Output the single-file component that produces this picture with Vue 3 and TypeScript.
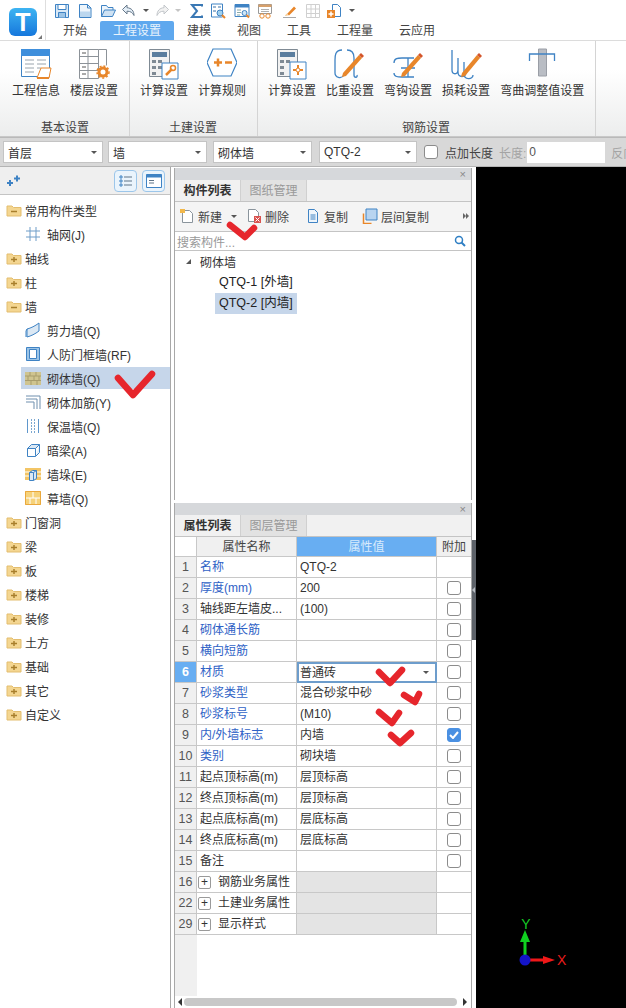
<script setup lang="ts">
interface PropRow {
  no: number
  name: string
  value?: string
  blue?: boolean
  check?: boolean
  checked?: boolean
  group?: boolean
  active?: boolean
}

const B = '#3f83c4'
const O = '#e8862a'
const G = '#7f8a94'

const icons: Record<string, string> = {
  save: `<path d="M1.500 1.500h13v13h-13z" fill="#d9e9f7" stroke="${B}"/><path d="M4 1.500h8v5H4z" fill="#fff" stroke="${B}"/><path d="M4.500 14.500v-5h7v5" fill="#9cc4e6" stroke="${B}"/>`,
  doc: `<path d="M2.500 1.500h8l3.500 3.500v9.500h-11.500z" fill="#eef5fb" stroke="${B}"/><path d="M3 8.500h10v5.500H3z" fill="#bcd7ee"/><path d="M10.500 1.500v3.500h3.500" fill="none" stroke="${B}"/>`,
  open: `<path d="M1.500 13.500v-11h5l1.500 2h5v3" fill="#eef5fb" stroke="${B}"/><path d="M1.500 13.500l3-6.500h11l-3 6.500z" fill="#cfe2f3" stroke="${B}"/>`,
  undo: `<path d="M6 2L1.500 6.500 6 11V8.200c3.500 0 5.500 1.300 7 4.300 0-4.500-2.500-7.500-7-7.800z" fill="#e4eef7" stroke="#66788a"/>`,
  redo: `<path d="M10 2l4.500 4.500L10 11V8.200c-3.500 0-5.500 1.300-7 4.300 0-4.500 2.500-7.500 7-7.800z" fill="#f2f2f2" stroke="#c2c6ca"/>`,
  sigma: `<path d="M13 3.500V2H3l5 6-5 6h10v-1.500" fill="none" stroke="#3a78b4" stroke-width="2"/>`,
  q1: `<path d="M1.500 1h11v13h-11z" fill="#fff" stroke="${B}"/><path d="M3 3h3v2H3zM3 7h3v2H3zM8 3h3v2H8z" fill="#9bb7d2"/><circle cx="10" cy="10" r="3" fill="#9fd0ee" stroke="${B}"/><path d="M12 12l3 3" stroke="${O}" stroke-width="2"/>`,
  q2: `<path d="M1 1.500h14v12H1z" fill="#fff" stroke="${B}"/><path d="M1 1.500h14v3H1z" fill="${B}"/><path d="M3 7h4M3 9.500h4M3 12h3" stroke="#8aa"/><circle cx="10.500" cy="10" r="2.500" fill="#cfe6f6" stroke="${B}"/><path d="M12.500 12l2.500 2.500" stroke="${O}" stroke-width="2"/>`,
  q3: `<path d="M1.500 1.500h13v9h-13z" fill="#fff" stroke="#9a9a9a"/><path d="M1.500 1.500h13v2.500h-13z" fill="#d7a06b"/><path d="M4 6.500h8M4 8.500h8" stroke="#b0b0b0"/><circle cx="5" cy="13" r="2.200" fill="none" stroke="${O}"/><circle cx="11" cy="13" r="2.200" fill="none" stroke="${O}"/>`,
  q4: `<path d="M6 11L13 3.500l2 2L8 12.500z" fill="${O}"/><path d="M2 14.500h13" stroke="#a9a9a9"/><path d="M4 13c.5-1.500 1-2 2-2.500l1.500 1.500c-1 .8-2 1-3.500 1z" fill="#f6cf9b"/>`,
  q5: `<path d="M1.500 1.500h13v13h-13zM6 1.500v13M10.500 1.500v13M1.500 6h13M1.500 10.500h13" fill="none" stroke="#d0d0d0"/>`,
  q6: `<path d="M6.500 1.500h5l3 3v9h-8z" fill="#fff" stroke="${B}"/><path d="M1 7h8v8H1z" fill="${O}"/><path d="M5 8.500v5M2.500 11h5" stroke="#fff" stroke-width="1.500"/>`
}

const quick = [
  { i: 'save', w: 23 }, { i: 'doc', w: 23 }, { i: 'open', w: 23 }, { i: 'undo', w: 18 }, { d: 1, w: 16 },
  { i: 'redo', w: 16 }, { d: 2, w: 17 }, { i: 'sigma', w: 20 }, { i: 'q1', w: 23 }, { i: 'q2', w: 24 },
  { i: 'q3', w: 23 }, { i: 'q4', w: 25 }, { i: 'q5', w: 23 }, { i: 'q6', w: 19 }, { d: 1, w: 17 }
]

const tabs = ['开始', '工程设置', '建模', '视图', '工具', '工程量', '云应用']

const big: Record<string, string> = {
  info: `<path d="M1.500 3.500h28v25h-28z" fill="#fff" stroke="${B}"/><path d="M1 1h29v7H1z" fill="#3f8fdc"/><path d="M5 12h9M5 16h9M5 20h9M5 24h9M17 12h9M17 16h9M17 20h4" stroke="#9aa4ad"/><path d="M21 20h10l-2 10H17z" fill="#fff" stroke="${O}"/><path d="M17 30h12" stroke="${O}" stroke-width="2"/>`,
  floor: `<path d="M1.500 1.500h19v29h-19zM10 1.500v29M1.500 8.500h19M1.500 15.500h19M1.500 22.500h19M20.500 1.500h8v16" fill="#fff" stroke="#8c9298"/><path d="M4 5h4M4 19h4M4 26h4" stroke="#555"/><circle cx="25" cy="24" r="4" fill="#fff" stroke="${O}" stroke-width="3"/><circle cx="25" cy="24" r="6" fill="none" stroke="${O}" stroke-width="1.500" stroke-dasharray="2 2"/>`,
  calc: `<path d="M1.500 1.500h20v27h-20z" fill="#f2f2f2" stroke="${G}"/><path d="M4 4h15v5H4z" fill="#5a7d9e"/><path d="M4 12h4v3H4zM10 12h4v3h-4zM4 18h4v3H4zM4 24h4v3H4zM10 18h4v3h-4z" fill="${G}"/><path d="M14 15h16v16H14z" fill="#fff" stroke="${B}"/><path d="M18 27l6-6" stroke="${O}" stroke-width="2.500"/><circle cx="25" cy="20" r="2.500" fill="none" stroke="${O}" stroke-width="1.500"/>`,
  rule: `<path d="M6 1h18l6 13.500-6 13.500H6L0 14.500z" fill="#fff" stroke="${B}" stroke-width="1.200"/><path d="M7 14.500h8M11 10.500v8" stroke="${O}" stroke-width="2.500"/><path d="M18 14.500h7" stroke="${O}" stroke-width="2.500"/>`,
  calc2: `<path d="M1.500 1.500h20v27h-20z" fill="#f2f2f2" stroke="${G}"/><path d="M4 4h15v5H4z" fill="#5a7d9e"/><path d="M4 12h4v3H4zM10 12h4v3h-4zM4 18h4v3H4zM4 24h4v3H4z" fill="${G}"/><path d="M14 14h16v17H14z" fill="#fff" stroke="${B}"/><path d="M22 17v10M17 22h10" stroke="${O}" stroke-width="2"/><circle cx="22" cy="22" r="2" fill="#fff" stroke="${O}"/>`,
  weight: `<path d="M8 2C1 2 1 8 1 12v13c0 4 6 7 9 2" fill="none" stroke="${B}" stroke-width="1.300"/><path d="M13 2c6 0 7 4 7 8v17c0 3 4 3 3 0" fill="none" stroke="${B}" stroke-width="1.300"/><path d="M9 25L25 7l3 3L12 28l-4 1z" fill="${O}"/><path d="M25 7l2-2 3 3-2 2z" fill="#d4552a"/>`,
  hook: `<path d="M2 15c0-5 4-5 8-5h12M2 25c0 4 4 4 8 4h12M16 10v19M9 20h14" fill="none" stroke="${B}" stroke-width="1.300"/><path d="M10 25L26 7l3 3L13 28l-4 1z" fill="${O}"/><path d="M26 7l2-2 3 3-2 2z" fill="#d4552a"/>`,
  loss: `<path d="M2 2v20c0 5 6 5 6 0V10c0 4 0 12 0 14 0 6 8 6 8 0" fill="none" stroke="${B}" stroke-width="1.300"/><path d="M14 14v12c0 6 9 6 9 1" fill="none" stroke="${B}" stroke-width="1.300"/><path d="M12 25L27 7l3 3-15 18-4 1z" fill="${O}"/><path d="M27 7l2-2 3 3-2 2z" fill="#d4552a"/>`,
  bend: `<path d="M10.500 1h8v27h-8z" fill="#b9bdc4" stroke="#9a9ea6"/><path d="M1.500 13V6h25v7" fill="none" stroke="${B}" stroke-width="1.300"/>`
}

const groups = [
  { title: '基本设置', first: true, items: [{ i: 'info', t: '工程信息', w: 32 }, { i: 'floor', t: '楼层设置', w: 32 }] },
  { title: '土建设置', items: [{ i: 'calc', t: '计算设置', w: 32 }, { i: 'rule', t: '计算规则', w: 30 }] },
  {
    title: '钢筋设置',
    items: [
      { i: 'calc2', t: '计算设置', w: 32 }, { i: 'weight', t: '比重设置', w: 32 }, { i: 'hook', t: '弯钩设置', w: 32 },
      { i: 'loss', t: '损耗设置', w: 32 }, { i: 'bend', t: '弯曲调整值设置', w: 28 }
    ]
  }
]

const selects = [
  { t: '首层', w: 100, m: 5 }, { t: '墙', w: 99, m: 6 }, { t: '砌体墙', w: 99, m: 7 }, { t: 'QTQ-2', w: 98, m: 7 }
]

const tree: Record<string, string> = {
  grid: `<path d="M1 5h14M1 11h14M5 1v14M11 1v14" fill="none" stroke="#6f9dc8" stroke-width="1"/>`,
  shear: `<path d="M2 7c4-1 8-3 12-6v8c-4 3-8 5-12 6z" fill="#dbe8f4" stroke="${B}"/><path d="M2 7l-1 2v6" fill="none" stroke="${B}"/>`,
  defense: `<path d="M1.500 1.500h13v13h-13z" fill="#9cc4e6" stroke="${B}"/><path d="M4.500 3.500h7v9h-7z" fill="#fff" stroke="${B}"/>`,
  brick: `<path d="M0 2h16v13H0z" fill="#cfc48f"/><path d="M0 6h16M0 10.500h16M5 2v4M11 2v4M3 6v4.500M9 6v4.500M14 6v4.500M6 10.500V15M12 10.500V15" stroke="#a89d6c"/>`,
  rebar: `<path d="M1 2h14v13M1 5h11v10M1 8h8v7" fill="none" stroke="#6f8fae"/>`,
  insul: `<path d="M2.500 1v14M13.500 1v14" fill="none" stroke="#5f97cc"/><path d="M6.500 1v14M9.500 1v14" fill="none" stroke="#7ba7d0" stroke-dasharray="2 1"/>`,
  beam: `<path d="M2.500 6.500l4-4h8l-4 4z" fill="#dbe8f4" stroke="${B}"/><path d="M2.500 6.500h8v8h-8z" fill="#fff" stroke="${B}"/><path d="M10.500 14.500l4-4v-8" fill="#e8f1f9" stroke="${B}"/>`,
  pier: `<path d="M0 2h16v12H0z" fill="#f3c565"/><path d="M0 6h16M0 10h16" stroke="#fff"/><path d="M4.500 6.500l3-2h4v8l-3 2h-4z" fill="#dbe8f4" stroke="${B}"/><path d="M8.500 6.500v8M4.500 6.500h4l3-2" fill="none" stroke="${B}"/>`,
  curtain: `<path d="M0 1h16v14H0z" fill="#f6d27a"/><path d="M8 1v7M0 8h16M5 8v7M11 8v7" stroke="#fff" stroke-width="1"/><path d="M.5 1.500h15v13H.5z" fill="none" stroke="#eaa83c"/>`
}

const treeRows = [
  { t: '常用构件类型', open: true }, { t: '轴网(J)', i: 'grid' }, { t: '轴线' }, { t: '柱' }, { t: '墙', open: true },
  { t: '剪力墙(Q)', i: 'shear' }, { t: '人防门框墙(RF)', i: 'defense' }, { t: '砌体墙(Q)', i: 'brick', sel: true },
  { t: '砌体加筋(Y)', i: 'rebar' }, { t: '保温墙(Q)', i: 'insul' }, { t: '暗梁(A)', i: 'beam' }, { t: '墙垛(E)', i: 'pier' },
  { t: '幕墙(Q)', i: 'curtain' }, { t: '门窗洞' }, { t: '梁' }, { t: '板' }, { t: '楼梯' }, { t: '装修' }, { t: '土方' },
  { t: '基础' }, { t: '其它' }, { t: '自定义' }
]

const tools = [
  { t: '新建', p: `<path d="M3.500 2.500h7l3 3v9h-10z" fill="#fff" stroke="#8a949c"/><path d="M1 1h5v4H1z" fill="#f2b84b"/>` },
  { t: '删除', p: `<path d="M2.500 1.500h7l3 3v9h-10z" fill="#fff" stroke="#8a949c"/><path d="M8 8h7v7H8z" fill="#d9534f"/><path d="M9.500 9.500l4 4M13.500 9.500l-4 4" stroke="#fff"/>` },
  { t: '复制', p: `<path d="M3.500 1.500h6l3 3v10h-9z" fill="#eef5fb" stroke="${B}"/><path d="M5.500 7h5M5.500 9h5M5.500 11h5" stroke="${B}"/>` },
  { t: '层间复制', p: `<path d="M1.500 5.500v10h8" fill="none" stroke="${O}" stroke-width="1.500"/><path d="M4 1h11v11H4z" fill="#b8d4f0" stroke="${B}"/>` }
]

const rows: PropRow[] = [
  { no: 1, name: '名称', value: 'QTQ-2', blue: true },
  { no: 2, name: '厚度(mm)', value: '200', blue: true, check: true },
  { no: 3, name: '轴线距左墙皮...', value: '(100)', check: true },
  { no: 4, name: '砌体通长筋', blue: true, check: true },
  { no: 5, name: '横向短筋', blue: true, check: true },
  { no: 6, name: '材质', value: '普通砖', blue: true, check: true, active: true },
  { no: 7, name: '砂浆类型', value: '混合砂浆中砂', blue: true, check: true },
  { no: 8, name: '砂浆标号', value: '(M10)', blue: true, check: true },
  { no: 9, name: '内/外墙标志', value: '内墙', blue: true, check: true, checked: true },
  { no: 10, name: '类别', value: '砌块墙', blue: true, check: true },
  { no: 11, name: '起点顶标高(m)', value: '层顶标高', check: true },
  { no: 12, name: '终点顶标高(m)', value: '层顶标高', check: true },
  { no: 13, name: '起点底标高(m)', value: '层底标高', check: true },
  { no: 14, name: '终点底标高(m)', value: '层底标高', check: true },
  { no: 15, name: '备注', check: true },
  { no: 16, name: '钢筋业务属性', group: true },
  { no: 22, name: '土建业务属性', group: true },
  { no: 29, name: '显示样式', group: true }
]

const marks = [
  '118,378 133,395 152,374',
  '230,225 245,237 254,228',
  '379,672 390,683 402,670',
  '404,695 415,702 419,694',
  '379,712 392,723 399,713',
  '391,735 400,743 411,733'
]
</script>

<template>
  <div class="app">
    <header class="top">
      <div class="logo-cell">
        <div class="logo">T</div>
        <i class="logo-corner"></i>
      </div>
      <div class="top-right">
        <div class="quick">
          <span v-for="(q, n) in quick" :key="n" class="quick-item" :style="{ width: q.w + 'px' }">
            <svg v-if="q.i" width="16" height="16" viewBox="0 0 16 16" v-html="icons[q.i]"></svg>
            <i v-else :class="['mini-caret', q.d === 2 && 'pale']"></i>
          </span>
        </div>
        <nav class="tabs">
          <span v-for="t in tabs" :key="t" :class="['tab', t === '工程设置' && 'on']">{{ t }}</span>
        </nav>
      </div>
    </header>

    <section class="ribbon">
      <div v-for="g in groups" :key="g.title" :class="['group', g.first && 'first']">
        <div class="group-items">
          <div v-for="b in g.items" :key="b.t" class="big-btn">
            <svg class="big-icon" :width="b.w" height="32" :viewBox="`0 0 ${b.w} 32`" v-html="big[b.i]"></svg>
            <span>{{ b.t }}</span>
          </div>
        </div>
        <div class="group-title">{{ g.title }}</div>
      </div>
    </section>

    <section class="bar">
      <div v-for="s in selects" :key="s.t" class="select" :style="{ width: s.w + 'px', marginRight: s.m + 'px' }">
        <span>{{ s.t }}</span><i class="mini-caret"></i>
      </div>
      <i class="box bar-box"></i>
      <span class="bar-label">点加长度</span>
      <span class="bar-muted">长度:</span>
      <div class="bar-input">0</div>
      <span class="bar-muted last">反向</span>
    </section>

    <main class="body">
      <aside class="nav">
        <div class="nav-head">
          <svg width="14" height="12" viewBox="0 0 14 12" class="nav-pin">
            <path d="M0 8h6M3 5v6M7 3.500h6M10 .5v6" stroke="#3f83c4" stroke-width="2" />
          </svg>
          <span class="nav-spacer"></span>
          <span class="nav-btn">
            <svg width="14" height="14" viewBox="0 0 14 14"><path d="M1 2h2v2H1zM1 6h2v2H1zM1 10h2v2H1z" fill="none" stroke="#3f83c4" /><path d="M5 3h8M5 7h8M5 11h8" stroke="#5f7488" /></svg>
          </span>
          <span class="nav-btn">
            <svg width="16" height="14" viewBox="0 0 16 14"><path d="M.5.5h15v13H.5z" fill="#fff" stroke="#3f83c4" /><path d="M.5.5h15v3H.5z" fill="#3f83c4" /><path d="M3 6.500h5M3 9h5" stroke="#5f7488" /></svg>
          </span>
        </div>
        <ul class="tree">
          <li v-for="r in treeRows" :key="r.t" :class="['tree-row', r.i && 'leaf', r.sel && 'sel']">
            <svg v-if="r.i" width="16" height="16" viewBox="0 0 16 16" v-html="tree[r.i]"></svg>
            <svg v-else width="16" height="14" viewBox="0 0 16 14">
              <path d="M1 3h5l1.500 1.500H15V13H1z" fill="#f4d691" stroke="#e3bd6e" />
              <path d="M5 8.500h6" stroke="#a87f2c" stroke-width="1.500" />
              <path v-if="!r.open" d="M8 6v5" stroke="#a87f2c" stroke-width="1.500" />
            </svg>
            <span>{{ r.t }}</span>
          </li>
        </ul>
      </aside>

      <div class="middle">
        <section class="panel list-panel">
          <div class="panel-grip">×</div>
          <div class="panel-tabs"><span class="ptab on">构件列表</span><span class="ptab">图纸管理</span></div>
          <div class="tools">
            <span v-for="(t, n) in tools" :key="t.t" class="tool">
              <svg width="16" height="16" viewBox="0 0 16 16" v-html="t.p"></svg>{{ t.t }}
              <i v-if="n === 0" class="mini-caret tool-caret"></i>
            </span>
            <span class="tool-more"><i></i><i></i></span>
          </div>
          <div class="search">
            <span>搜索构件...</span>
            <svg width="12" height="12" viewBox="0 0 12 12"><circle cx="5" cy="5" r="3.500" fill="none" stroke="#2f7fc4" stroke-width="1.500" /><path d="M7.500 7.500l3.500 3.500" stroke="#2f7fc4" stroke-width="2" /></svg>
          </div>
          <div class="parts">
            <div class="part-root"><i class="arrow"></i>砌体墙</div>
            <div class="part">QTQ-1 [外墙]</div>
            <div class="part sel">QTQ-2 [内墙]</div>
          </div>
        </section>

        <section class="panel prop-panel">
          <div class="panel-grip">×</div>
          <div class="panel-tabs"><span class="ptab on">属性列表</span><span class="ptab">图层管理</span></div>
          <div class="row head">
            <span class="no"></span>
            <span class="name-h">属性名称</span>
            <span class="val-h">属性值</span>
            <span class="ext-h">附加</span>
          </div>
          <div v-for="r in rows" :key="r.no" :class="['row', r.active && 'active', r.group && 'group-row']">
            <span class="no">{{ r.no }}</span>
            <span :class="['name', r.blue && 'blue']">
              <i v-if="r.group" class="plus">+</i>{{ r.name }}
            </span>
            <span class="val">
              {{ r.value }}
              <i v-if="r.active" class="mini-caret val-caret"></i>
            </span>
            <span class="ext">
              <i v-if="r.check" :class="['box', r.checked && 'checked']">
                <svg v-if="r.checked" width="10" height="8" viewBox="0 0 10 8"><path d="M1 4l3 3 5-6" fill="none" stroke="#fff" stroke-width="2" /></svg>
              </i>
            </span>
          </div>
          <div class="filler"><span class="filler-no"></span></div>
          <div class="hscroll">
            <i class="arr left"></i>
            <span class="thumb"></span>
            <i class="arr right"></i>
          </div>
        </section>
      </div>

      <div class="strip"><span class="strip-handle"></span></div>

      <div class="canvas">
        <div class="axes">
          <svg width="70" height="70" viewBox="0 0 70 70">
            <path d="M19 50V30" stroke="#10d020" stroke-width="3" />
            <path d="M19 20l-5 12h10z" fill="#10d020" />
            <path d="M19 50h20" stroke="#f01818" stroke-width="3" />
            <path d="M49 50l-12-4v8z" fill="#f01818" />
            <circle cx="19" cy="50" r="5.500" fill="#1414c8" />
            <text x="20" y="19" class="axis-y">Y</text>
            <text x="51" y="55" class="axis-x">X</text>
          </svg>
        </div>
      </div>
    </main>

    <svg class="marks" width="626" height="1008" viewBox="0 0 626 1008">
      <polyline v-for="m in marks" :key="m" :points="m" fill="none" stroke="#e6262c" stroke-width="6.500" stroke-linecap="round" stroke-linejoin="round" />
    </svg>
  </div>
</template>

<style>
html, body { margin: 0; padding: 0; overflow: hidden; background: #fff; }
</style>

<style scoped>
.app {
  position: relative;
  width: 626px;
  height: 1008px;
  overflow: hidden;
  display: flex;
  flex-direction: column;
  font-family: "Liberation Sans", "Noto Sans CJK SC", sans-serif;
  font-size: 12px;
  color: #222;
  background: #fff;
}
i { display: block; font-style: normal; }
ul { margin: 0; padding: 0; list-style: none; }

.top { display: flex; height: 41px; flex: none; background: #fff; border-bottom: 1px solid #dcdcdc; box-sizing: border-box; }
.logo-cell { position: relative; width: 46px; border-right: 1px solid #dedede; padding: 8px 0 0 9px; box-sizing: border-box; }
.logo {
  width: 28px;
  height: 28px;
  border-radius: 6px;
  background: linear-gradient(#3db4f2, #1677dc);
  color: #fff;
  font: bold 25px/28px "Liberation Sans", sans-serif;
  text-align: center;
}
.logo-corner { position: absolute; right: 3px; bottom: 1px; width: 0; height: 0; border-left: 4px solid transparent; border-bottom: 4px solid #777; }
.top-right { flex: 1; display: flex; flex-direction: column; }
.quick { display: flex; height: 21px; align-items: center; padding-left: 4.5px; flex: none; }
.quick-item { display: flex; justify-content: center; align-items: center; flex: none; }
.mini-caret { width: 0; height: 0; border-left: 3px solid transparent; border-right: 3px solid transparent; border-top: 3px solid #555; }
.mini-caret.pale { border-top-color: #c4c4c4; }
.tabs { display: flex; height: 19px; padding-left: 4px; }
.tab { padding: 0 13px; line-height: 20px; color: #444; }
.tab.on { background: #5fa8ee; color: #e8f3fd; border-radius: 2px 2px 0 0; }

.ribbon { display: flex; height: 96px; flex: none; background: linear-gradient(#fff 30%, #eceded); border-bottom: 1px solid #c8c8c8; box-sizing: border-box; }
.group { display: flex; flex-direction: column; padding: 0 11px 0 10px; border-right: 1px solid #d4d4d4; }
.group.first { padding-left: 12px; padding-right: 11px; }
.group-items { display: flex; gap: 10px; flex: 1; padding-top: 7px; }
.big-btn { display: flex; flex-direction: column; align-items: center; color: #333; white-space: nowrap; }
.big-icon { display: block; height: 32px; margin-bottom: 2px; }
.big-btn span { line-height: 18px; }
.group-title { text-align: center; line-height: 18px; margin-bottom: -1px; color: #444; }

.bar { display: flex; align-items: center; height: 30px; flex: none; padding-left: 3px; background: #d8d8d8; border-top: 1px solid #b9b9b9; border-bottom: 1px solid #b4b4b4; box-sizing: border-box; white-space: nowrap; }
.select { display: flex; align-items: center; justify-content: space-between; height: 22px; background: #fff; border: 1px solid #c4c4c4; box-sizing: border-box; padding: 0 5px 0 4px; flex: none; color: #333; }
.box { width: 14px; height: 14px; border: 1px solid #8c8c8c; border-radius: 3px; background: #fff; box-sizing: border-box; flex: none; }
.bar-label { margin-left: 7px; color: #444; }
.bar-muted { margin-left: 6px; color: #a4a4a4; }
.bar-input { width: 78px; height: 21px; line-height: 21px; background: #fff; margin-left: 1px; padding-left: 2px; box-sizing: border-box; color: #555; flex: none; }
.bar-muted.last { margin-left: 6px; }

.body { flex: 1; display: flex; min-height: 0; }
.nav { width: 171px; flex: none; border-right: 1px solid #a8a8a8; box-sizing: border-box; background: #fff; }
.nav-head { display: flex; align-items: center; height: 28px; background: #efefef; border-bottom: 1px solid #c4c4c4; padding: 0 5px 0 7px; box-sizing: border-box; gap: 5px; }
.nav-spacer { flex: 1; }
.nav-btn { width: 23px; height: 22px; border: 1px solid #9cc6ea; border-radius: 4px; background: #eaf4fc; display: flex; align-items: center; justify-content: center; box-sizing: border-box; }
.tree { padding-top: 3px; }
.tree-row { display: flex; align-items: center; gap: 3px; height: 24px; padding-left: 6px; color: #333; }
.tree-row.leaf { padding-left: 25px; gap: 6px; }
.tree-row.sel { background: #c6d6ea; margin-left: 21px; padding-left: 4px; height: 22px; margin-top: 1px; margin-bottom: 1px; }

.middle { width: 298px; flex: none; display: flex; flex-direction: column; margin-left: 3px; gap: 3px; padding-top: 1px; }
.panel { display: flex; flex-direction: column; border: solid #a8a8a8; border-width: 0 1px; background: #fff; box-sizing: border-box; }
.list-panel { height: 332px; flex: none; }
.prop-panel { flex: 1; min-height: 0; }
.panel-grip { height: 12px; background: #d6d8db; text-align: right; padding-right: 5px; line-height: 12px; color: #888; font-size: 11px; flex: none; }
.panel-tabs { display: flex; height: 22px; background: #f1f1f1; border-bottom: 1px solid #c4c4c4; box-sizing: border-box; flex: none; }
.ptab { width: 66px; text-align: center; line-height: 22px; color: #999; background: #e2e2e2; border-right: 1px solid #d0d0d0; box-sizing: border-box; }
.ptab.on { background: #f1f1f1; color: #333; font-weight: bold; }
.tools { display: flex; align-items: center; height: 30px; flex: none; padding: 0 0 1px 4px; background: #f4f4f4; border-bottom: 1px solid #c4c4c4; box-sizing: border-box; color: #444; }
.tool { display: flex; align-items: center; gap: 3px; white-space: nowrap; }
.tool:nth-child(1) { margin-right: 9px; }
.tool:nth-child(2) { margin-right: 16px; }
.tool:nth-child(3) { margin-right: 14px; }
.tool-caret { margin-left: 6px; }
.tool-more { display: flex; margin-left: auto; margin-right: 2px; }
.tool-more i { width: 0; height: 0; border-top: 3px solid transparent; border-bottom: 3px solid transparent; border-left: 3px solid #666; }
.search { display: flex; align-items: center; justify-content: space-between; height: 19px; flex: none; padding: 0 5px 0 2px; border-bottom: 1px solid #c4c4c4; box-sizing: border-box; color: #999; }
.part-root { display: flex; align-items: center; height: 21px; padding-left: 11px; color: #333; }
.arrow { width: 0; height: 0; border-left: 5px solid transparent; border-bottom: 5px solid #555; margin-right: 9px; }
.part { height: 21px; line-height: 21px; margin-left: 40px; width: 82px; padding-left: 4px; box-sizing: border-box; color: #222; white-space: nowrap; font-size: 12.5px; }
.part.sel { background: #c6d6ea; }

.row { display: grid; grid-template-columns: 22px 100px 140px 34px; height: 21px; flex: none; }
.row > span { border-bottom: 1px solid #c8c8c8; border-right: 1px solid #c8c8c8; box-sizing: border-box; line-height: 21px; white-space: nowrap; overflow: hidden; }
.row > span:last-child { border-right: none; }
.no { background: #f0f0f0; text-align: center; color: #555; font-size: 12.5px; }
.head { height: 20px; }
.head .no { background: #fff; }
.name-h { background: #f0f0f0; text-align: center; color: #444; }
.val-h { background: #68aef2; text-align: center; color: #d8ebfc; }
.ext-h { background: #f0f0f0; text-align: center; color: #444; }
.name { padding-left: 3px; display: flex; align-items: center; color: #333; }
.name.blue { color: #2f62c6; }
.val { position: relative; padding-left: 3px; color: #333; }
.ext { display: flex; align-items: center; justify-content: center; }
.ext .box { width: 14px; height: 14px; }
.box.checked { background: #4a90e2; border-color: #4a90e2; display: flex; align-items: center; justify-content: center; }
.row.active .no { background: #68aef2; color: #fff; font-weight: bold; }
.row.active .val { border: 2px solid #6d9dcc; line-height: 18px; padding-left: 1px; }
.val-caret { position: absolute; right: 6px; top: 7px; }
.group-row .val { background: #e4e4e4; }
.group-row .name { color: #333; padding-left: 1px; }
.plus { width: 13px; height: 13px; border: 1px solid #9a9a9a; border-radius: 2px; box-sizing: border-box; line-height: 11px; text-align: center; margin-right: 7px; color: #333; flex: none; }
.filler { flex: 1; display: flex; min-height: 0; }
.filler-no { width: 22px; background: #f0f0f0; }
.hscroll { display: flex; align-items: center; height: 12px; flex: none; padding: 0 4px 0 3px; background: #fff; }
.thumb { flex: 1; height: 8px; margin: 0 6px 0 2px; background: #c8c8c8; border-radius: 4px; }
.arr { width: 0; height: 0; border-top: 4px solid transparent; border-bottom: 4px solid transparent; }
.arr.left { border-right: 4px solid #333; }
.arr.right { border-left: 4px solid #333; }

.strip { width: 4px; flex: none; background: #fff; padding-top: 373px; box-sizing: border-box; }
.strip-handle { position: relative; display: block; width: 4px; height: 100px; background: #5d6269; }
.strip-handle::after { content: ""; position: absolute; left: 0; top: 47px; border-top: 3px solid transparent; border-bottom: 3px solid transparent; border-right: 3px solid #b8bcc2; }
.canvas { flex: 1; background: #000; display: flex; align-items: flex-end; padding: 0 0 28px 30px; box-sizing: border-box; }
.axes svg { display: block; }
.axis-y { fill: #16c926; font: 14px "Liberation Sans", sans-serif; text-anchor: middle; }
.axis-x { fill: #e81c1c; font: 14px "Liberation Sans", sans-serif; }

.marks { position: absolute; left: 0; top: 0; pointer-events: none; }
</style>
